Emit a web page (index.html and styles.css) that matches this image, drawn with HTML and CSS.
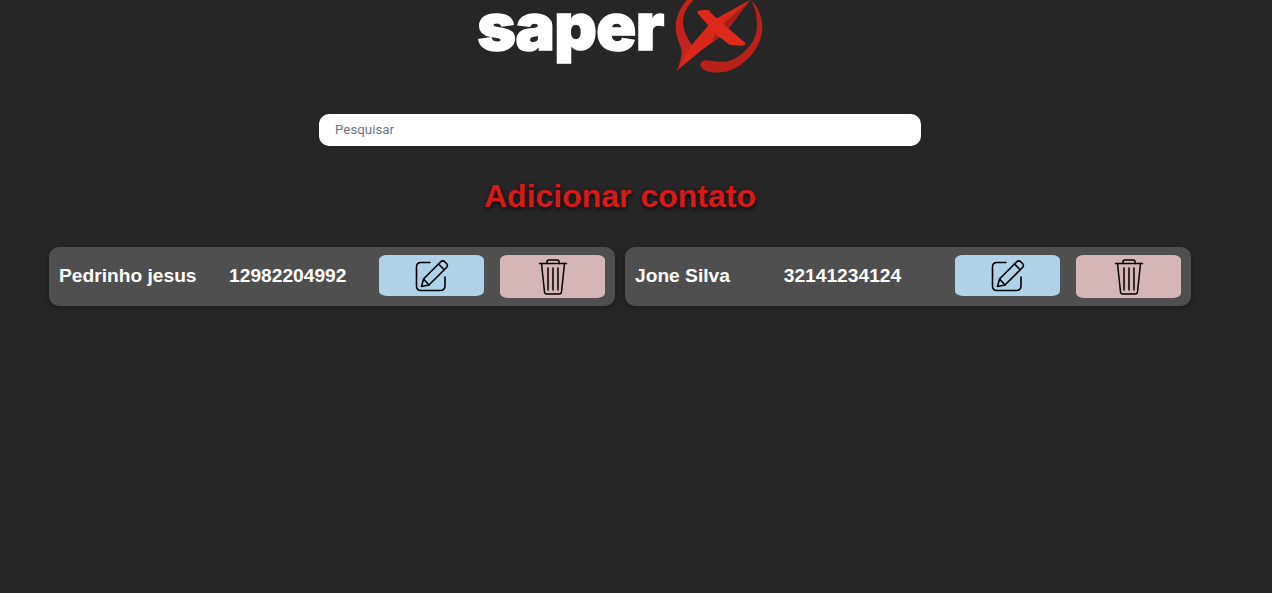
FILE: index.html
```html
<!DOCTYPE html>
<html lang="en">
<head>
    <meta charset="UTF-8">
    <meta name="viewport" content="width=device-width, initial-scale=1.0">
    <title>Contatos</title>
    <link rel="stylesheet" href="styles.css">
</head>
<body>

    <div class="page">
        <!-- Logo -->
        <header class="logo">
            <span class="logo-text">saper</span>
            <svg class="logo-mark" width="88" height="80" viewBox="40 0 264 240">
                <path fill="#c4231b" d="M75 0 C50 30 38 65 43 95 C47 125 62 140 60 160 C58 180 50 198 45 212 C42 205 80 172 90 135 C75 110 60 85 65 55 C68 35 80 15 95 0 Z"/>
                <path fill="#d9281b" d="M45 212 L90 135 L152 62 L265 0 L190 100 L120 150 Z"/>
                <path fill="#a81e18" d="M265 0 L190 100 L150 125 L170 85 Z"/>
                <path fill="#de2a1c" d="M108 40 C104 32 112 29 140 30 L154 45 L250 128 C252 134 248 137 240 137 L205 135 L165 105 Z"/>
                <path fill="#b8201a" d="M268 0 C290 20 304 55 302 90 C298 135 265 180 220 205 C195 220 150 222 128 210 C115 203 112 188 124 182 C135 177 165 188 190 185 C225 180 265 150 282 105 C290 75 285 30 268 0 Z"/>
            </svg>
        </header>

        <!-- Busca -->
        <div class="search">
            <input type="text" class="search-input" placeholder="Pesquisar">
        </div>

        <h1 class="title">Adicionar contato</h1>

        <!-- Lista de contatos -->
        <div class="contacts">
            <div class="contact">
                <span class="contact-text">Pedrinho jesus</span>
                <span class="contact-text">12982204992</span>
                <div class="actions">
                    <button class="btn btn-edit">
                        <svg width="34" height="34" viewBox="0 0 34 34" fill="none" stroke="#000" stroke-width="1.6" stroke-linecap="round" stroke-linejoin="round">
                            <path d="M15 3.5 H6 Q1.5 3.5 1.5 8 V27 Q1.5 31.5 6 31.5 H25 Q30 31.5 30 27 V18"/>
                            <path d="M6.5 27.5 L8.5 20 L26 2.5 Q28 1 30 3 L32 5 Q33 7 31.5 8.5 L14 26 Z"/>
                            <path d="M8.5 20 L14 26 M23.5 5 L29 10.5"/>
                        </svg>
                    </button>
                    <button class="btn btn-delete">
                        <svg width="30" height="38" viewBox="0 0 30 38" fill="none" stroke="#000" stroke-width="1.5" stroke-linecap="round" stroke-linejoin="round">
                            <path d="M1.5 5.5 H28.5"/>
                            <path d="M9 5.5 V3.5 Q9 2 11 2 H19 Q21 2 21 3.5 V5.5"/>
                            <path d="M3.5 5.5 L6.5 34 Q6.7 36 9 36 H21 Q23.3 36 23.5 34 L26.5 5.5"/>
                            <path d="M10 10 V32 M15 10 V32 M20 10 V32"/>
                        </svg>
                    </button>
                </div>
            </div>
            <div class="contact">
                <span class="contact-text">Jone Silva</span>
                <span class="contact-text">32141234124</span>
                <div class="actions">
                    <button class="btn btn-edit">
                        <svg width="34" height="34" viewBox="0 0 34 34" fill="none" stroke="#000" stroke-width="1.6" stroke-linecap="round" stroke-linejoin="round">
                            <path d="M15 3.5 H6 Q1.5 3.5 1.5 8 V27 Q1.5 31.5 6 31.5 H25 Q30 31.5 30 27 V18"/>
                            <path d="M6.5 27.5 L8.5 20 L26 2.5 Q28 1 30 3 L32 5 Q33 7 31.5 8.5 L14 26 Z"/>
                            <path d="M8.5 20 L14 26 M23.5 5 L29 10.5"/>
                        </svg>
                    </button>
                    <button class="btn btn-delete">
                        <svg width="30" height="38" viewBox="0 0 30 38" fill="none" stroke="#000" stroke-width="1.5" stroke-linecap="round" stroke-linejoin="round">
                            <path d="M1.5 5.5 H28.5"/>
                            <path d="M9 5.5 V3.5 Q9 2 11 2 H19 Q21 2 21 3.5 V5.5"/>
                            <path d="M3.5 5.5 L6.5 34 Q6.7 36 9 36 H21 Q23.3 36 23.5 34 L26.5 5.5"/>
                            <path d="M10 10 V32 M15 10 V32 M20 10 V32"/>
                        </svg>
                    </button>
                </div>
            </div>
        </div>
    </div>

</body>
</html>
```

FILE: styles.css
```css
body {
    font-family: "Liberation Sans", Arial, sans-serif;
    background-color: #262626;
    margin: 0;
    height: 100vh;
    overflow: hidden;
}
.page {
    width: 1240px;
}
.logo {
    display: flex;
    justify-content: center;
    align-items: flex-start;
    gap: 11px;
    height: 114px;
}
.logo-text {
    font-family: Inter, sans-serif;
    font-size: 66px;
    font-weight: 900;
    line-height: 53px;
    letter-spacing: -0.6px;
    color: #fff;
    -webkit-text-stroke: 1.5px #fff;
}
.logo-mark {
    display: block;
}
.search {
    display: flex;
    justify-content: center;
}
.search-input {
    width: 602px;
    height: 32px;
    box-sizing: border-box;
    padding: 0 16px 2px;
    border: none;
    border-radius: 10px;
    background: #fff;
    font-family: Roboto, sans-serif;
    font-size: 13.33px;
    outline: none;
}
.search-input::placeholder {
    color: #6c757d;
}
.title {
    margin: 32px 0 32px;
    text-align: center;
    color: #d61a1a;
    font-size: 32px;
    line-height: 37px;
    font-weight: bold;
    text-shadow: 1px 2px 4px rgba(0,0,0,0.8);
}
.contacts {
    display: flex;
    justify-content: center;
    gap: 10px;
}
.contact {
    width: 566px;
    box-sizing: border-box;
    display: flex;
    justify-content: space-between;
    align-items: center;
    padding: 8px 10px;
    background: #4f4f4f;
    border-radius: 10px;
    box-shadow: 0px 2px 6px rgba(0,0,0,0.3);
}
.contact-text {
    color: #fff;
    font-size: 19.2px;
    font-weight: bold;
    margin-top: -1px;
}
.actions {
    display: flex;
    align-items: flex-start;
    gap: 16px;
}
.btn {
    width: 105px;
    height: 41px;
    padding: 0;
    border: none;
    border-radius: 8px / 5px;
    display: flex;
    justify-content: center;
    align-items: center;
}
.btn-edit {
    background: #aed3e8;
}
.btn-delete {
    height: 43px;
    background: #d5b6b6;
}
```
